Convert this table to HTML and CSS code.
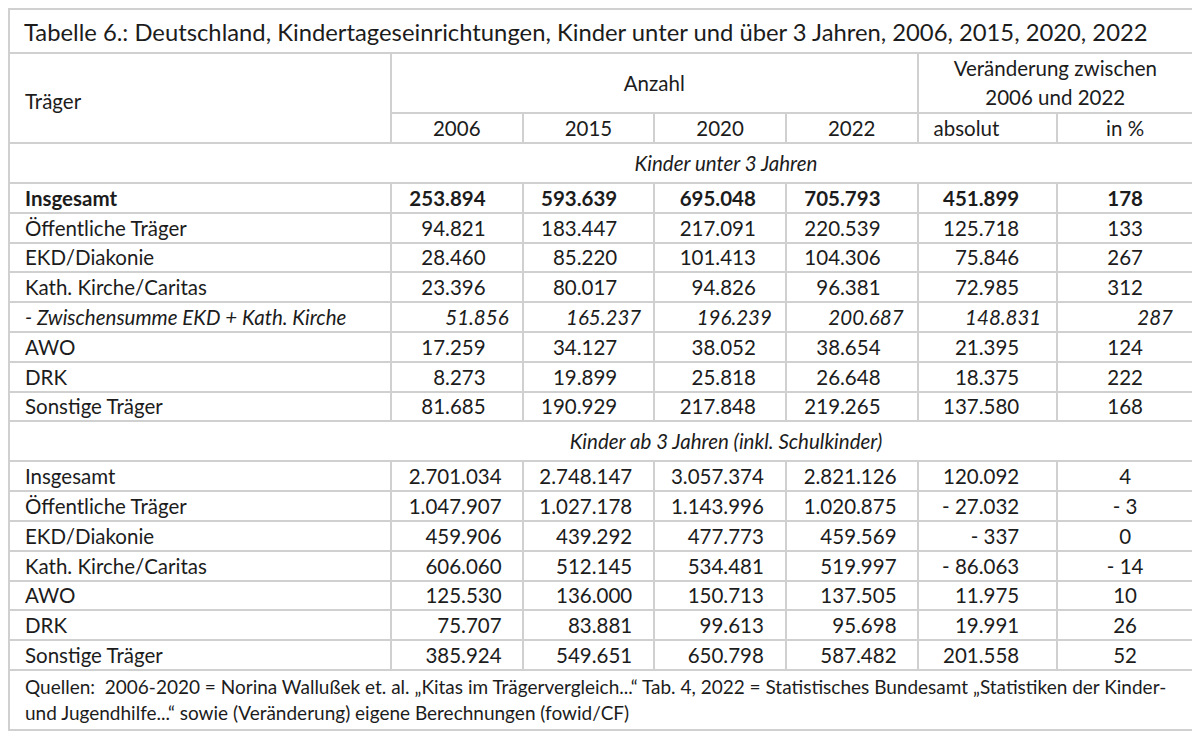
FILE: index.html
```html
<!DOCTYPE html>
<html lang="de">
<head>
<meta charset="utf-8">
<title>Tabelle 6</title>
<link rel="stylesheet" href="styles.css">
</head>
<body>
<table class="tbl">
  <colgroup>
    <col class="c-label">
    <col class="c-year">
    <col class="c-year">
    <col class="c-year">
    <col class="c-year">
    <col class="c-abs">
    <col class="c-pct">
  </colgroup>
  <tbody>
    <tr class="r-title">
      <td colspan="7" class="title">Tabelle 6.: Deutschland, Kindertageseinrichtungen, Kinder unter und über 3 Jahren, 2006, 2015, 2020, 2022</td>
    </tr>
    <tr class="r-head1">
      <td rowspan="2" class="lbl head-lbl">Träger</td>
      <td colspan="4" class="ctr">Anzahl</td>
      <td colspan="2" class="ctr change">Veränderung zwischen<br>2006 und 2022</td>
    </tr>
    <tr class="r-head2">
      <td class="ctr">2006</td>
      <td class="ctr">2015</td>
      <td class="ctr">2020</td>
      <td class="ctr">2022</td>
      <td class="abs-head">absolut</td>
      <td class="ctr">in %</td>
    </tr>
    <tr class="r-section">
      <td colspan="7" class="section">Kinder unter 3 Jahren</td>
    </tr>
    <tr class="r-data s1 bold">
      <td class="lbl">Insgesamt</td><td class="n2">253.894</td><td class="n3">593.639</td><td class="n4">695.048</td><td class="n5">705.793</td><td class="n6">451.899</td><td class="pct">178</td>
    </tr>
    <tr class="r-data s1">
      <td class="lbl">Öffentliche Träger</td><td class="n2">94.821</td><td class="n3">183.447</td><td class="n4">217.091</td><td class="n5">220.539</td><td class="n6">125.718</td><td class="pct">133</td>
    </tr>
    <tr class="r-data s1">
      <td class="lbl">EKD/Diakonie</td><td class="n2">28.460</td><td class="n3">85.220</td><td class="n4">101.413</td><td class="n5">104.306</td><td class="n6">75.846</td><td class="pct">267</td>
    </tr>
    <tr class="r-data s1">
      <td class="lbl">Kath. Kirche/Caritas</td><td class="n2">23.396</td><td class="n3">80.017</td><td class="n4">94.826</td><td class="n5">96.381</td><td class="n6">72.985</td><td class="pct">312</td>
    </tr>
    <tr class="r-data sub">
      <td class="lbl">- Zwischensumme EKD + Kath. Kirche</td><td class="n2">51.856</td><td class="n3">165.237</td><td class="n4">196.239</td><td class="n5">200.687</td><td class="n6">148.831</td><td class="pct">287</td>
    </tr>
    <tr class="r-data s1">
      <td class="lbl">AWO</td><td class="n2">17.259</td><td class="n3">34.127</td><td class="n4">38.052</td><td class="n5">38.654</td><td class="n6">21.395</td><td class="pct">124</td>
    </tr>
    <tr class="r-data s1">
      <td class="lbl">DRK</td><td class="n2">8.273</td><td class="n3">19.899</td><td class="n4">25.818</td><td class="n5">26.648</td><td class="n6">18.375</td><td class="pct">222</td>
    </tr>
    <tr class="r-data s1">
      <td class="lbl">Sonstige Träger</td><td class="n2">81.685</td><td class="n3">190.929</td><td class="n4">217.848</td><td class="n5">219.265</td><td class="n6">137.580</td><td class="pct">168</td>
    </tr>
    <tr class="r-section">
      <td colspan="7" class="section">Kinder ab 3 Jahren (inkl. Schulkinder)</td>
    </tr>
    <tr class="r-data s2">
      <td class="lbl">Insgesamt</td><td class="n2">2.701.034</td><td class="n3">2.748.147</td><td class="n4">3.057.374</td><td class="n5">2.821.126</td><td class="n6">120.092</td><td class="pct">4</td>
    </tr>
    <tr class="r-data s2">
      <td class="lbl">Öffentliche Träger</td><td class="n2">1.047.907</td><td class="n3">1.027.178</td><td class="n4">1.143.996</td><td class="n5">1.020.875</td><td class="n6">- 27.032</td><td class="pct">- 3</td>
    </tr>
    <tr class="r-data s2">
      <td class="lbl">EKD/Diakonie</td><td class="n2">459.906</td><td class="n3">439.292</td><td class="n4">477.773</td><td class="n5">459.569</td><td class="n6">- 337</td><td class="pct">0</td>
    </tr>
    <tr class="r-data s2">
      <td class="lbl">Kath. Kirche/Caritas</td><td class="n2">606.060</td><td class="n3">512.145</td><td class="n4">534.481</td><td class="n5">519.997</td><td class="n6">- 86.063</td><td class="pct">- 14</td>
    </tr>
    <tr class="r-data s2">
      <td class="lbl">AWO</td><td class="n2">125.530</td><td class="n3">136.000</td><td class="n4">150.713</td><td class="n5">137.505</td><td class="n6">11.975</td><td class="pct">10</td>
    </tr>
    <tr class="r-data s2">
      <td class="lbl">DRK</td><td class="n2">75.707</td><td class="n3">83.881</td><td class="n4">99.613</td><td class="n5">95.698</td><td class="n6">19.991</td><td class="pct">26</td>
    </tr>
    <tr class="r-data s2">
      <td class="lbl">Sonstige Träger</td><td class="n2">385.924</td><td class="n3">549.651</td><td class="n4">650.798</td><td class="n5">587.482</td><td class="n6">201.558</td><td class="pct">52</td>
    </tr>
    <tr class="r-foot">
      <td colspan="7" class="foot">Quellen:&nbsp; 2006-2020 = Norina Wallußek et. al. „Kitas im Trägervergleich...“ Tab. 4, 2022 = Statistisches Bundesamt „Statistiken der Kinder-<br>und Jugendhilfe...“ sowie (Veränderung) eigene Berechnungen (fowid/CF)</td>
    </tr>
  </tbody>
</table>
</body>
</html>
```

FILE: styles.css
```css
html, body {
  background: #ffffff;
}

body {
  margin: 8px;
  font-family: "Lato", "Open Sans", "Liberation Sans", sans-serif;
  color: #1c1c1c;
}

.tbl {
  border-collapse: collapse;
  table-layout: fixed;
  width: 1186px;
  font-size: 20.5px;
}

.tbl td {
  border: 2px solid #d0d0d0;
  padding: 0;
  white-space: nowrap;
  vertical-align: middle;
}

.c-label { width: 380px; }
.c-year { width: 131px; }
.c-abs { width: 139px; }
.c-pct { width: 135px; }

.tbl .r-title td { height: 41px; }
.tbl .title {
  font-size: 23.8px;
  padding-left: 14px;
  padding-top: 1px;
}

.tbl .r-head1 td { height: 57px; }
.tbl .r-head2 td { height: 28px; }

.tbl .change {
  line-height: 29px;
}

.tbl .head-lbl {
  padding-top: 6px;
}

.tbl .ctr { text-align: center; }

.tbl .abs-head {
  text-align: left;
  padding-left: 15px;
}

.tbl .r-section td { height: 38px; }
.tbl .section {
  font-style: italic;
  text-align: center;
  padding-left: 250px;
}

.tbl .r-data td { height: 27.8px; line-height: 26px; }

.tbl .lbl {
  text-align: left;
  padding-left: 15px;
}

.tbl .bold td { font-weight: 700; }

.tbl .n2, .tbl .n3, .tbl .n4, .tbl .n5, .tbl .n6 { text-align: right; }
.tbl .pct { text-align: center; }

.tbl .s1 .n2 { padding-right: 36px; }
.tbl .s1 .n3 { padding-right: 36px; }
.tbl .s1 .n4 { padding-right: 29px; }
.tbl .s1 .n5 { padding-right: 36px; }
.tbl .s1 .n6 { padding-right: 37px; }

.tbl .s2 .n2 { padding-right: 20px; }
.tbl .s2 .n3 { padding-right: 21px; }
.tbl .s2 .n4 { padding-right: 21px; }
.tbl .s2 .n5 { padding-right: 20px; }
.tbl .s2 .n6 { padding-right: 37px; }

.tbl .sub td { font-style: italic; }
.tbl .sub .n2 { padding-right: 13px; }
.tbl .sub .n3 { padding-right: 12px; }
.tbl .sub .n4 { padding-right: 13px; }
.tbl .sub .n5 { padding-right: 13px; }
.tbl .sub .n6 { padding-right: 15px; }
.tbl .sub .pct { text-align: right; padding-right: 19px; }

.tbl .r-foot td { height: 57px; }
.tbl .foot {
  font-size: 19px;
  line-height: 26px;
  padding-left: 15px;
  padding-top: 1px;
}
```
